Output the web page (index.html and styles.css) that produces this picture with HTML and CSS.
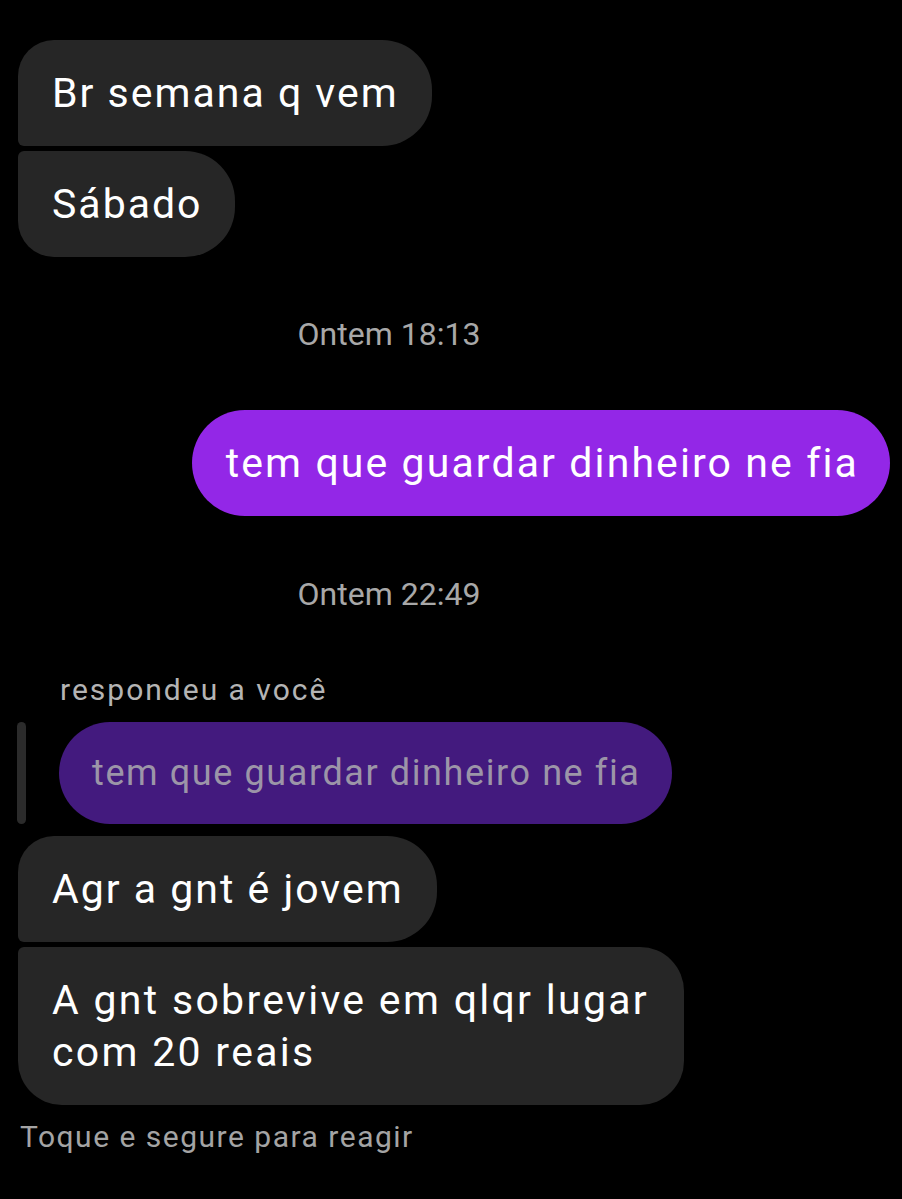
FILE: index.html
```html
<!DOCTYPE html>
<html lang="pt-BR">
<head>
  <meta charset="UTF-8" />
  <meta name="viewport" content="width=device-width, initial-scale=1.0"/>
  <title>Conversa</title>
  <link rel="stylesheet" href="styles.css">
</head>
<body>

  <main class="chat">
    <div class="msg in first">Br semana q vem</div>
    <div class="msg in last">Sábado</div>

    <p class="time">Ontem 18:13</p>

    <div class="msg out">tem que guardar dinheiro ne fia</div>

    <p class="time">Ontem 22:49</p>

    <p class="reply-label">respondeu a você</p>
    <div class="reply">
      <span class="reply-bar"></span>
      <div class="quoted">tem que guardar dinheiro ne fia</div>
    </div>

    <div class="msg in first after-reply">Agr a gnt é jovem</div>
    <div class="msg in last tall">A gnt sobrevive em qlqr lugar<br>com 20 reais</div>

    <p class="hint">Toque e segure para reagir</p>
  </main>

</body>
</html>
```

FILE: styles.css
```css
body {
  margin: 0;
  background: #000;
  color: #fff;
  font-family: Roboto, "Noto Sans", sans-serif;
}

.chat {
  display: flex;
  flex-direction: column;
  align-items: flex-start;
  padding: 40px 12px 0 18px;
}

.msg {
  font-size: 41px;
  letter-spacing: 2px;
  line-height: 52px;
  padding: 27px 33px 27px 34px;
  background: #262626;
  border-radius: 50px;
}

.msg.in + .msg.in {
  margin-top: 5px;
}

.msg.first {
  border-radius: 36px 50px 50px 6px;
}

.msg.last {
  border-radius: 6px 50px 50px 36px;
}

.msg.tall {
  letter-spacing: 2.3px;
  padding-right: 35px;
  border-radius: 6px 44px 44px 44px;
}

.msg.out {
  align-self: flex-end;
  letter-spacing: 2.1px;
  background: #9327e7;
  border-radius: 53px;
  padding-right: 31px;
}

.time {
  align-self: stretch;
  margin: 57px 0 56px;
  padding-right: 130px;
  text-align: center;
  font-size: 32px;
  line-height: 40px;
  color: #a8a8a8;
}

.time + .reply-label {
  margin-top: 0;
}

.msg.out + .time {
  margin-top: 58px;
  margin-bottom: 58px;
}

.reply-label {
  margin: 0 0 14px 42px;
  font-size: 30px;
  letter-spacing: 2px;
  line-height: 36px;
  color: #b4b4b4;
}

.reply {
  display: flex;
  gap: 33px;
  margin-left: -1px;
}

.reply-bar {
  width: 9px;
  border-radius: 5px;
  background: #2b2b2b;
}

.quoted {
  font-size: 36px;
  letter-spacing: 1.6px;
  line-height: 48px;
  padding: 27px 31px 27px 33px;
  background: #431a7e;
  color: #9c95a8;
  border-radius: 51px;
}

.msg.after-reply {
  margin-top: 12px;
}

.hint {
  margin: 14px 0 0 2px;
  font-size: 30px;
  letter-spacing: 1.5px;
  line-height: 36px;
  color: #a4a4a4;
}
```
